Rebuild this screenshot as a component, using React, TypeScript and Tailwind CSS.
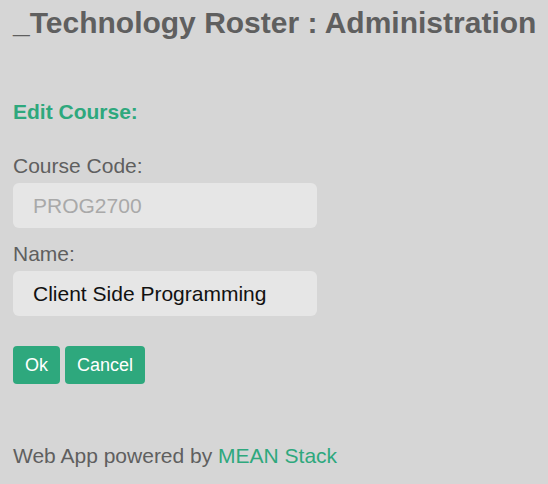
export default function App() {
  return (
    <div className="min-h-[484px] w-full bg-[#d6d6d6] px-[13px] pt-[5px] text-[#5f5f5f]" style={{ fontFamily: '"Liberation Sans", Arial, sans-serif' }}>
      <h1 className="m-0 whitespace-nowrap text-[30px] font-bold leading-[36px] text-[#5f5f5f]">_Technology Roster : Administration</h1>
      <h2 className="mt-[59px] text-[21px] font-bold leading-[24px] text-[#2ea87d]">Edit Course:</h2>
      <div className="mt-[30px] text-[21px] leading-[24px]">Course Code:</div>
      <div className="mt-[5px] flex h-[45px] w-[304px] items-center rounded-[6px] bg-[#e6e6e6] px-[20px] text-[21px] text-[#a9a9a9]">PROG2700</div>
      <div className="mt-[14px] text-[21px] leading-[24px]">Name:</div>
      <div className="mt-[5px] flex h-[45px] w-[304px] items-center rounded-[6px] bg-[#e6e6e6] px-[20px] text-[21px] text-[#111111]">Client Side Programming</div>
      <div className="mt-[30px] flex gap-[5px]">
        <button className="h-[38px] w-[47px] rounded-[4px] bg-[#2ea87d] text-[18px] text-white">Ok</button>
        <button className="h-[38px] w-[80px] rounded-[4px] bg-[#2ea87d] text-[18px] text-white">Cancel</button>
      </div>
      <div className="mt-[60px] text-[21px] leading-[24px]">
        Web App powered by <span className="text-[#2ea87d]">MEAN Stack</span>
      </div>
    </div>
  );
}
